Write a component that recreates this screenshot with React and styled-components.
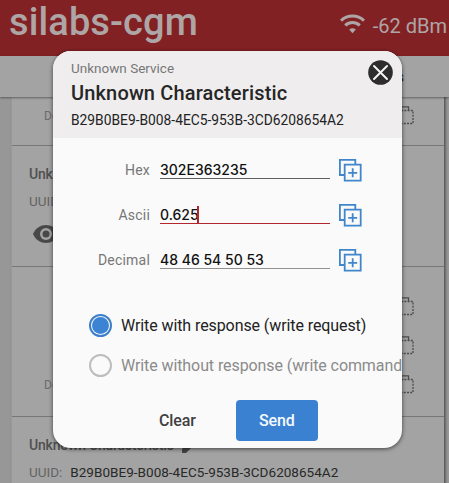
import React from "react";
import styled, { createGlobalStyle, css } from "styled-components";

const GlobalStyle = createGlobalStyle`
  *, *::before, *::after { box-sizing: border-box; }
  html, body, #root { height: 100%; }
  body { margin: 0; overflow: hidden; background: #979797; font-family: Roboto, sans-serif; }
`;

const Screen = styled.div`
  position: relative;
  display: flex;
  flex-direction: column;
  width: 449px;
  height: 483px;
  overflow: hidden;
  background: #979797;
`;

const TopBar = styled.header`
  display: flex;
  flex: none;
  justify-content: space-between;
  height: 56px;
  padding: 0 2px 0 9px;
  background: #822124;
  color: #aea6a6;
`;

const DeviceName = styled.h1`
  margin: 0;
  font-size: 38px;
  line-height: 44px;
  font-weight: 500;
  letter-spacing: 0.12px;
  white-space: nowrap;
`;

const Signal = styled.div`
  display: flex;
  align-items: center;
  gap: 8px;
  height: 51px;
  font-size: 20px;
  white-space: nowrap;
  svg { margin-top: -4px; }
`;

const TabStrip = styled.nav`
  display: flex;
  flex: none;
  justify-content: flex-end;
  align-items: center;
  height: 41px;
  padding-right: 45px;
  background: #a3a3a3;
  box-shadow: 0 1px 2px rgba(0, 0, 0, 0.4);
  color: #333;
  font-size: 14px;
  font-weight: 500;
  z-index: 1;
`;

const Panel = styled.main`
  flex: 1;
  margin: 0 4px 0 11px;
  background: #a3a3a3;
  border-left: 1px solid #999;
  border-right: 1px solid #606060;
  box-shadow: 1px 0 2px rgba(0, 0, 0, 0.35);
`;

const Section = styled.section`
  height: ${(p) => p.$height}px;
  padding: ${(p) => p.$top || 0}px 30px 0 17px;
  border-bottom: 1px solid #777;
  overflow: hidden;
`;

const ValueRow = styled.div`
  display: flex;
  justify-content: space-between;
  align-items: center;
  height: 39px;
  padding-left: 15px;
  color: #6b6b6b;
  font-size: 12px;
  line-height: 14px;
  svg { margin: -2px 0 0 auto; }
  span { margin-top: -2px; }
`;

const CharName = styled.div`
  display: flex;
  align-items: center;
  gap: 8px;
  height: 18px;
  color: #505050;
  font-size: 14px;
  font-weight: 500;
  letter-spacing: -0.2px;
`;

const CharId = styled.div`
  display: flex;
  gap: 8px;
  margin-top: 9px;
  height: 18px;
  line-height: 18px;
  color: #646464;
  font-size: 13.5px;
  strong { color: #282828; font-weight: 400; letter-spacing: 0.03px; }
`;

const EyeSlot = styled.div`
  margin: 15px 0 0 4px;
  height: 24px;
`;

const Dialog = styled.div`
  position: absolute;
  z-index: 2;
  left: 53px;
  top: 51px;
  display: flex;
  flex-direction: column;
  width: 349px;
  height: 397px;
  overflow: hidden;
  border-radius: 18px;
  background: #fafafa;
  box-shadow: 0 1px 4px rgba(0, 0, 0, 0.6);
`;

const DialogHead = styled.div`
  display: flex;
  flex: none;
  justify-content: space-between;
  height: 87px;
  padding: 8px 9px 0 18px;
  background: #efedee;
  white-space: nowrap;
`;

const ServiceName = styled.div`
  color: #777;
  font-size: 13.5px;
  line-height: 18px;
`;

const DialogTitle = styled.h2`
  margin: 3px 0 0;
  color: #262626;
  font-size: 20px;
  line-height: 26px;
  font-weight: 500;
  letter-spacing: 0.15px;
`;

const DialogId = styled.div`
  margin-top: 5px;
  color: #222;
  font-size: 13.8px;
  line-height: 18px;
`;

const CloseButton = styled.button`
  display: block;
  width: 25px;
  height: 25px;
  margin-top: 1px;
  padding: 0;
  border: 0;
  background: none;
`;

const Fields = styled.div`
  display: flex;
  flex-direction: column;
  flex: none;
  padding-top: 9px;
`;

const Field = styled.label`
  display: grid;
  grid-template-columns: 97px 170px 24px;
  column-gap: 10px;
  align-items: center;
  height: 45px;
  svg { margin: 1px 0 0 -1px; }
`;

const FieldLabel = styled.span`
  color: #777;
  font-size: 14px;
  line-height: 18px;
  text-align: right;
  letter-spacing: 0.2px;
`;

const FieldValue = styled.span`
  display: flex;
  align-items: center;
  height: 18px;
  padding-top: 2px;
  border-bottom: 1px solid ${(p) => (p.$active ? "#b3262d" : p.$soft ? "#919191" : "#606060")};
  color: #111;
  font-family: Inter, sans-serif;
  font-size: 14px;
  line-height: 18px;
  font-weight: 500;
  white-space: pre;
  ${(p) => p.$active && css`
    &::after { content: ""; flex: none; width: 2px; height: 17px; margin: -2px 0 0 -2px; background: #b3262d; }
  `}
`;

const Choices = styled.div`
  display: flex;
  flex: none;
  flex-direction: column;
  gap: 17px;
  padding: 32px 0 0 36px;
`;

const Choice = styled.div`
  display: flex;
  align-items: center;
  gap: 9px;
  height: 23px;
  color: ${(p) => (p.$selected ? "#222" : "#8b8b8b")};
  font-size: 16px;
  letter-spacing: -0.09px;
  white-space: nowrap;
`;

const Radio = styled.span`
  flex: none;
  width: 23px;
  height: 23px;
  padding: 1px;
  border: 2px solid ${(p) => (p.$selected ? "#3a7fc8" : "#bdbdbd")};
  border-radius: 50%;
  background: ${(p) => (p.$selected ? "#3c84d3" : "transparent")};
  background-clip: content-box;
`;

const Actions = styled.div`
  display: flex;
  flex: none;
  align-items: center;
  gap: 40px;
  padding: 23px 0 0 106px;
`;

const ActionButton = styled.button`
  height: 41px;
  padding: 1px 0 0;
  border: 0;
  border-radius: 4px;
  background: none;
  color: #404040;
  font: 500 16px/20px Roboto, sans-serif;
  letter-spacing: -0.1px;
  ${(p) => p.$primary && css`
    width: 82px;
    background: #3a82d1;
    color: #f6f9fd;
  `}
`;

const WifiIcon = () => (
  <svg width="25" height="20" viewBox="0 0 25 20" fill="none" stroke="currentColor" strokeWidth="3">
    <path d="M1 6.6C7.5.5 17.5.5 24 6.6M5.2 11.3C9.4 7.4 15.6 7.4 19.8 11.3" />
    <path d="M9.2 15.6Q12.5 12.8 15.8 15.6L12.5 19.2Z" fill="currentColor" stroke="none" />
  </svg>
);

const CopyDashed = () => (
  <svg width="22" height="22" viewBox="0 0 22 22" fill="none" stroke="#4c4c4c" strokeWidth="1.3">
    <path d="M1 14V1.8h15.5v3.4M1 14h4" />
    <path d="M6 5.5h15v13H6z" strokeDasharray="2 1.2" />
  </svg>
);

const EyeIcon = () => (
  <svg width="26" height="18" viewBox="0 0 26 18">
    <path d="M0 9C5-3 21-3 26 9 21 21 5 21 0 9Z" fill="#484848" />
    <circle cx="13" cy="9" r="6" fill="#a3a3a3" />
    <circle cx="13" cy="9" r="3.5" fill="#484848" />
  </svg>
);

const PencilIcon = () => (
  <svg width="16" height="16" viewBox="0 0 16 16">
    <path d="M0 16v-4L9.5 2.5l4 4L4 16ZM10.5 1.5 12 0l4 4-1.5 1.5Z" fill="#454545" />
  </svg>
);

const CloseIcon = () => (
  <svg width="25" height="25" viewBox="0 0 25 25">
    <circle cx="12.5" cy="12.5" r="12.3" fill="#2d2d2d" />
    <path d="m6 6 13 13M19 6 6 19" stroke="#f4f4f4" strokeWidth="2" strokeLinecap="round" />
  </svg>
);

const CopyPlus = () => (
  <svg width="23" height="23" viewBox="0 0 23 23" fill="none" stroke="#4186ca" strokeWidth="1.8">
    <path d="M5 16H.9V.9H16.3V5" />
    <path d="M5.7 5.7h16v16h-16zM13.7 9.3v9M9.2 13.8h9" />
  </svg>
);

const fields = [
  { label: "Hex", value: "302E363235" },
  { label: "Ascii", value: "0.625", active: true },
  { label: "Decimal", value: "48 46 54 50 53", soft: true },
];

const ID = "B29B0BE9-B008-4EC5-953B-3CD6208654A2";

export default function App() {
  return (
    <>
      <GlobalStyle />
      <Screen>
        <TopBar>
          <DeviceName>silabs-cgm</DeviceName>
          <Signal><WifiIcon />-62 dBm</Signal>
        </TopBar>
        <TabStrip>s</TabStrip>
        <Panel>
          <Section $height={49}>
            <ValueRow><span>Decimal</span><CopyDashed /></ValueRow>
          </Section>
          <Section $height={121} $top={19}>
            <CharName>Unknown</CharName>
            <CharId>UUID:</CharId>
            <EyeSlot><EyeIcon /></EyeSlot>
          </Section>
          <Section $height={150} $top={21}>
            <ValueRow><CopyDashed /></ValueRow>
            <ValueRow><CopyDashed /></ValueRow>
            <ValueRow><span>Decimal</span><CopyDashed /></ValueRow>
          </Section>
          <Section $height={90} $top={19}>
            <CharName>Unknown Characteristic<PencilIcon /></CharName>
            <CharId>UUID:<strong>{ID}</strong></CharId>
          </Section>
        </Panel>
        <Dialog role="dialog">
          <DialogHead>
            <div>
              <ServiceName>Unknown Service</ServiceName>
              <DialogTitle>Unknown Characteristic</DialogTitle>
              <DialogId>{ID}</DialogId>
            </div>
            <CloseButton aria-label="Close"><CloseIcon /></CloseButton>
          </DialogHead>
          <Fields>
            {fields.map((f) => (
              <Field key={f.label}>
                <FieldLabel>{f.label}</FieldLabel>
                <FieldValue $active={f.active} $soft={f.soft}>{f.value}</FieldValue>
                <CopyPlus />
              </Field>
            ))}
          </Fields>
          <Choices>
            <Choice $selected><Radio $selected />Write with response (write request)</Choice>
            <Choice><Radio />Write without response (write command)</Choice>
          </Choices>
          <Actions>
            <ActionButton>Clear</ActionButton>
            <ActionButton $primary>Send</ActionButton>
          </Actions>
        </Dialog>
      </Screen>
    </>
  );
}
